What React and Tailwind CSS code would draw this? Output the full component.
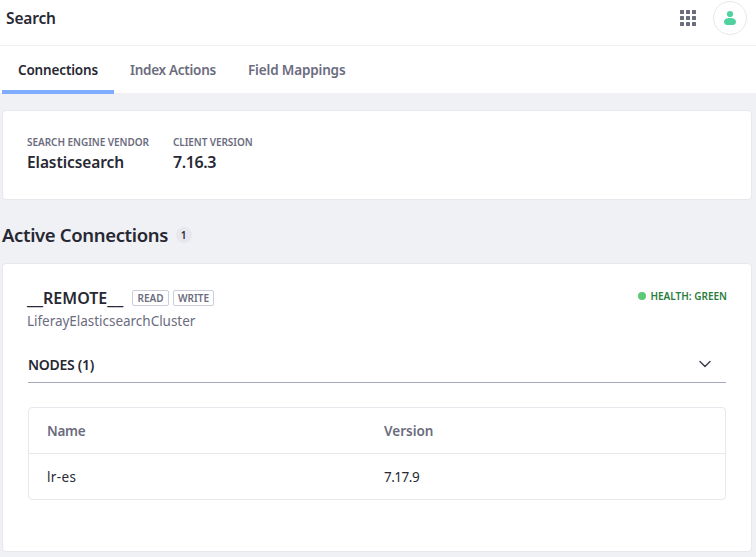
const tabs = [
  { label: 'Connections', active: true, width: 'w-20', tracking: 'tracking-[-0.16px]' },
  { label: 'Index Actions', active: false, width: 'w-[86px]', tracking: 'tracking-[-0.28px]' },
  { label: 'Field Mappings', active: false, width: 'w-[98px]', tracking: 'tracking-[-0.16px]' },
];

function Header() {
  return (
    <header className="flex h-[46px] items-start justify-between border-b border-[#f0f0f3] pl-1.5 pr-[9px]">
      <h1 className="mt-[6px] text-[15.5px] leading-6 font-semibold tracking-[-0.15px]">Search</h1>
      <div className="flex items-start">
        <svg className="mt-2.5 mr-[17px] size-4" viewBox="0 0 16 16" fill="#6b6c7e">
          {[0, 6, 12].map((y) =>
            [0, 6, 12].map((x) => <rect key={`${x}-${y}`} x={x} y={y} width="4" height="4" rx="0.6" />)
          )}
        </svg>
        <span className="mt-px flex size-[34px] items-center justify-center rounded-full border border-[#e7e7ed]">
          <svg className="size-4" viewBox="0 0 16 16" fill="#50d2a0">
            <circle cx="8" cy="4" r="3.1" />
            <path d="M2 11.6C2 9.3 4.4 7.9 8 7.9s6 1.4 6 3.7c0 2-1.200 3.400-3 3.400H5c-1.800 0-3-1.400-3-3.400z" />
          </svg>
        </span>
      </div>
    </header>
  );
}

function Tabs() {
  return (
    <nav className="flex h-[47px] pl-0.5 text-[13.5px] leading-[21px] font-semibold whitespace-nowrap">
      {tabs.map((t) => (
        <a
          key={t.label}
          className={`h-12 border-b-4 px-4 pt-[14px] ${t.active ? 'border-[#80acff] text-[#272833]' : 'border-transparent text-[#6b6c7e]'}`}
        >
          <span className={`block ${t.width} ${t.tracking}`}>{t.label}</span>
        </a>
      ))}
    </nav>
  );
}

export default function App() {
  return (
    <div className="h-[557px] w-full overflow-hidden bg-[#f0f1f5] font-['Noto_Sans',sans-serif] text-[#272833]">
      <div className="bg-white">
        <Header />
        <Tabs />
      </div>
      <main className="pr-1 pl-0.5 pt-[17px]">
        <section className="flex h-[90px] rounded border border-[#e7e7ed] bg-white pt-6 pl-6 whitespace-nowrap">
          <div className="w-[146px]">
            <div className="text-[10px] leading-[15px] font-semibold tracking-[-0.04px] text-[#6b6c7e]">SEARCH ENGINE VENDOR</div>
            <div className="text-[15.5px] leading-6 font-semibold tracking-[-0.08px]">Elasticsearch</div>
          </div>
          <div>
            <div className="text-[10px] leading-[15px] font-semibold tracking-[-0.08px] text-[#6b6c7e]">CLIENT VERSION</div>
            <div className="text-[16px] leading-6 font-semibold tracking-[-0.4px]">7.16.3</div>
          </div>
        </section>
        <div className="flex h-[63px] items-start pt-5">
          <h2 className="w-[174px] text-[18.5px] leading-[30px] font-semibold tracking-[-0.35px] whitespace-nowrap">Active Connections</h2>
          <span className="mt-[7px] flex size-4 items-center justify-center rounded-full bg-[#e7e7ed] pr-px text-[10px] leading-4 font-semibold">1</span>
        </div>
        <section className="h-[289px] rounded border border-[#e7e7ed] bg-white px-6 pt-[22px]">
          <div className="flex h-6 items-start whitespace-nowrap">
            <h3 className="w-[105px] text-[16px] leading-6 font-semibold">
              <span className="text-[19px] leading-none">__</span>
              <span>REMOTE</span>
              <span className="text-[19px] leading-none">__</span>
            </h3>
            <span className="mt-[4px] mr-1 flex h-4 w-[37px] items-center justify-center rounded-xs border border-[#cdced9] text-[10px] font-semibold text-[#6b6c7e]">READ</span>
            <span className="mt-[4px] flex h-4 w-[41px] items-center justify-center rounded-xs border border-[#cdced9] text-[10px] font-semibold text-[#6b6c7e]">WRITE</span>
            <div className="ml-auto flex items-center pt-[2px] text-[10px] leading-[16px] font-semibold text-[#287d3c]">
              <span className="mr-1 size-2 rounded-full bg-[#5aca75]" />
              HEALTH: GREEN
            </div>
          </div>
          <div className="pt-px text-[13.5px] leading-[21px] tracking-[-0.03px] text-[#6b6c7e]">LiferayElasticsearchCluster</div>
          <div className="ml-px mt-[17px] flex h-[34px] w-[698px] items-start justify-between border-b border-[#a7a9bc] pt-[5px] pr-[15px]">
            <span className="text-[14px] leading-[21px] font-semibold tracking-[-0.3px]">NODES (1)</span>
            <svg className="mt-1 h-3 w-3" viewBox="0 0 12 12" fill="none" stroke="#393a4a" strokeWidth="1.4" strokeLinecap="round" strokeLinejoin="round">
              <path d="M1 3.500L6 8.500L11 3.500" />
            </svg>
          </div>
          <div className="mt-6 ml-px w-[698px] rounded border border-[#e7e7ed] text-[13.5px] leading-[21px]">
            <div className="flex h-[46px] items-center border-b border-[#e7e7ed] pt-0.5 pl-[18px] font-semibold text-[#6b6c7e]">
              <span className="w-[337px] tracking-[-0.3px]">Name</span>
              <span>Version</span>
            </div>
            <div className="flex h-[45px] items-center pt-0.5 pl-[18px]">
              <span className="w-[337px] tracking-[0.35px]">lr-es</span>
              <span className="tracking-[-0.5px]">7.17.9</span>
            </div>
          </div>
        </section>
      </main>
    </div>
  );
}
